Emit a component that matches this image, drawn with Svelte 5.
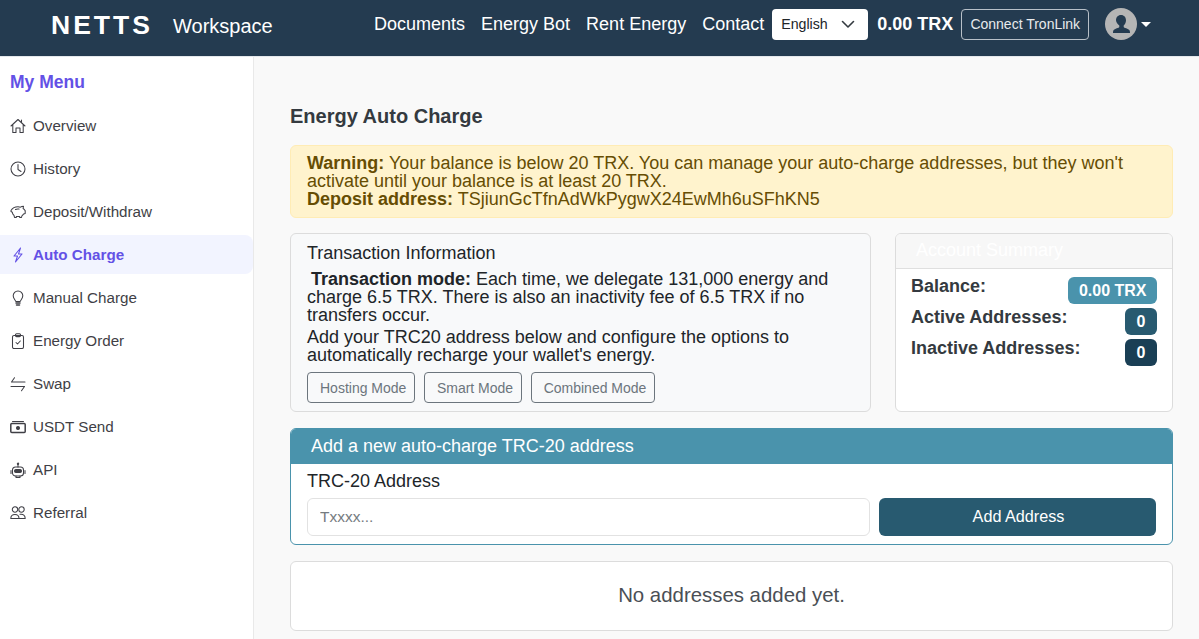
<script>
  const menu = [
    { label: 'Overview', icon: 'home' },
    { label: 'History', icon: 'clock' },
    { label: 'Deposit/Withdraw', icon: 'piggy' },
    { label: 'Auto Charge', icon: 'bolt', active: true },
    { label: 'Manual Charge', icon: 'bulb' },
    { label: 'Energy Order', icon: 'clipboard' },
    { label: 'Swap', icon: 'swap' },
    { label: 'USDT Send', icon: 'cash' },
    { label: 'API', icon: 'robot' },
    { label: 'Referral', icon: 'people' }
  ];
  const links = ['Documents', 'Energy Bot', 'Rent Energy', 'Contact'];
  const modes = ['Hosting Mode', 'Smart Mode', 'Combined Mode'];
</script>

<header class="topbar">
  <div class="brand">NETTS</div>
  <div class="workspace">Workspace</div>
  <nav class="links">
    {#each links as link}
      <span>{link}</span>
    {/each}
  </nav>
  <div class="lang">
    <span>English</span>
    <svg width="16" height="16" viewBox="0 0 16 16" fill="none" stroke="#343a40" stroke-width="1.6" stroke-linecap="round" stroke-linejoin="round"><path d="M2.500 5.500l5.500 5.500 5.500-5.500" /></svg>
  </div>
  <div class="balance">0.00 TRX</div>
  <button class="connect" type="button">Connect TronLink</button>
  <div class="user">
    <svg width="32" height="32" viewBox="0 0 32 32">
      <circle cx="16" cy="16" r="16" fill="#b5b5b5" />
      <path d="M16 7c3.200 0 5 2.400 5 5.300 0 2.200-.9 4.200-2.300 5.300v1.400c0 .8 4.800 1.700 5.800 3.300.5.800.5 2.200.5 2.700H8c0-.5 0-1.900.5-2.700 1-1.600 5.800-2.500 5.800-3.300v-1.400C12.900 16.500 11 14.500 11 12.300 11 9.400 12.800 7 16 7z" fill="#243b50" />
    </svg>
    <i class="caret"></i>
  </div>
</header>

<div class="page">
  <aside class="side">
    <h3>My Menu</h3>
    <ul>
      {#each menu as item}
        <li class:active={item.active}>
          <svg class="ico" width="16" height="16" viewBox="0 0 16 16" fill="none" stroke="currentColor" stroke-width="1.050" stroke-linecap="round" stroke-linejoin="round">
            {#if item.icon === 'home'}
              <path d="M1 8l7-6.500L15 8M2.800 6.500V14.500H6V10h4v4.500h3.200V6.500M11.500 2v2" />
            {:else if item.icon === 'clock'}
              <circle cx="8" cy="8" r="7" /><path d="M8 3.500V8.500l3 2" />
            {:else if item.icon === 'piggy'}
              <path d="M1 6.500C2.500 4 5 2.800 8 2.800c1 0 1.800.1 2.500.4.800-.7 1.900-1 3-1l-.4 2.300c.8.500 1.400 1.100 1.900 2h.2v3l-1.600.6c-.4.700-1 1.300-1.700 1.800l-.4 1.500H9.700v-1H6.300v1H4.500l-.5-2C2.900 10.500 2.400 9.500 2.300 8.200L1 7.500z" /><path d="M5.500 5.500C6.500 5 7.800 4.900 9 5.100" />
            {:else if item.icon === 'bolt'}
              <path d="M10.500 1L4 9h3.500L5.500 15 12 7H8.500z" />
            {:else if item.icon === 'bulb'}
              <path d="M5.800 11.500C5.500 10 3.200 8.500 3.200 5.800a4.800 4.800 0 0 1 9.600 0c0 2.700-2.300 4.200-2.600 5.700z" /><path d="M6 13h4M6.500 15h3" stroke-width="1.500" />
            {:else if item.icon === 'clipboard'}
              <rect x="2.500" y="2.500" width="11" height="13" rx="1.500" /><rect x="5.500" y=".8" width="5" height="2.800" rx="1" /><path d="M6 9.500l1.500 1.500 2.800-3" />
            {:else if item.icon === 'swap'}
              <path d="M15 6H1.500M4.500 1.800L1.500 6M1 10.500h13.500M11.500 14.700l3-4.200" />
            {:else if item.icon === 'cash'}
              <rect x=".8" y="4.500" width="14.400" height="9" rx="1" stroke-width="1.500" /><path d="M2.500 2.500h11" /><circle cx="8" cy="9" r="1.500" fill="currentColor" />
            {:else if item.icon === 'robot'}
              <rect x="2.500" y="5" width="11" height="9" rx="3" /><rect x="4.500" y="7.500" width="7" height="3" rx="1.500" fill="currentColor" /><path d="M8 5V2.500M1 8.500v3M15 8.500v3M6 14v1.500h4V14" /><circle cx="8" cy="1.800" r=".7" />
            {:else}
              <circle cx="5" cy="4.500" r="2.700" /><circle cx="11.500" cy="4.500" r="2.700" /><path d="M.8 13.500c0-2.500 1.500-4 4.200-4s4 1.500 4 4zM10 9.300c3.300-.5 5.200 1.200 5.200 4.200H9" />
            {/if}
          </svg>
          <span>{item.label}</span>
        </li>
      {/each}
    </ul>
  </aside>

  <main class="content">
    <h2>Energy Auto Charge</h2>

    <div class="warning">
      <b>Warning:</b> Your balance is below 20 TRX. You can manage your auto-charge addresses, but they won't activate until your balance is at least 20 TRX.<br />
      <b>Deposit address:</b> TSjiunGcTfnAdWkPygwX24EwMh6uSFhKN5
    </div>

    <div class="row">
      <section class="info">
        <h4>Transaction Information</h4>
        <p class="first"><b>Transaction mode:</b> Each time, we delegate 131,000 energy and charge 6.5 TRX. There is also an inactivity fee of 6.5 TRX if no transfers occur.</p>
        <p>Add your TRC20 address below and configure the options to automatically recharge your wallet's energy.</p>
        <div class="modes">
          {#each modes as mode}
            <button type="button">{mode}</button>
          {/each}
        </div>
      </section>

      <section class="summary">
        <div class="summary-head">Account Summary</div>
        <div class="summary-body">
          <div class="stat">
            <b>Balance:</b>
            <span class="badge teal">0.00 TRX</span>
          </div>
          <div class="stat">
            <b>Active Addresses:</b>
            <span class="badge mid">0</span>
          </div>
          <div class="stat">
            <b>Inactive Addresses:</b>
            <span class="badge dark">0</span>
          </div>
        </div>
      </section>
    </div>

    <section class="add">
      <div class="add-head">Add a new auto-charge TRC-20 address</div>
      <div class="add-body">
        <label for="addr">TRC-20 Address</label>
        <div class="add-row">
          <input id="addr" type="text" placeholder="Txxxx..." />
          <button type="button">Add Address</button>
        </div>
      </div>
    </section>

    <section class="empty">No addresses added yet.</section>
  </main>
</div>

<style>
  :global(body) {
    margin: 0;
    height: 639px;
    overflow: hidden;
    background: #f9f9f9;
    font-family: "Liberation Sans", Arial, sans-serif;
    color: #212529;
  }
  .topbar {
    height: 57px;
    background: #243b50;
    color: #fff;
    display: flex;
    align-items: center;
    box-sizing: border-box;
    padding: 0 47px 8px 51px;
    border-bottom: 1px solid #e4e8ec;
    white-space: nowrap;
  }
  .brand {
    font-size: 26.500px;
    font-weight: 700;
    letter-spacing: 3px;
    width: 122px;
    flex: none;
    margin-top: 2px;
  }
  .workspace {
    font-size: 20px;
    margin-top: 4px;
    width: 201px;
    flex: none;
  }
  .links {
    display: flex;
    gap: 16px;
    font-size: 18px;
  }
  .lang {
    margin-left: 8px;
    width: 96px;
    height: 31px;
    flex: none;
    box-sizing: border-box;
    padding: 0 12px 0 9px;
    background: #fff;
    border-radius: 4px;
    color: #212529;
    font-size: 14.200px;
    display: flex;
    align-items: center;
    justify-content: space-between;
  }
  .balance {
    margin-left: 9px;
    font-size: 18px;
    font-weight: 700;
  }
  .connect {
    margin-left: 8px;
    width: 128px;
    height: 31px;
    flex: none;
    background: transparent;
    border: 1px solid #b8c0c8;
    border-radius: 4px;
    color: #e8eaec;
    font: 14px "Liberation Sans", Arial, sans-serif;
    padding: 0;
  }
  .user {
    margin-left: 16px;
    display: flex;
    align-items: center;
    gap: 4px;
  }
  .caret {
    width: 0;
    height: 0;
    border: 5px solid transparent;
    border-top-color: #fff;
    border-bottom: 0;
  }
  .page {
    display: flex;
    height: 582px;
  }
  .side {
    width: 254px;
    flex: none;
    box-sizing: border-box;
    background: #fff;
    border-right: 1px solid #e9e9e9;
    padding-top: 14px;
  }
  .side h3 {
    margin: 0 0 13px 10px;
    font-size: 17.500px;
    line-height: 22px;
    color: #6351e6;
  }
  .side ul {
    list-style: none;
    margin: 0;
    padding: 0;
  }
  .side li {
    height: 39px;
    margin-bottom: 4px;
    padding-left: 10px;
    display: flex;
    align-items: center;
    gap: 7px;
    font-size: 15.200px;
    color: #3f3f46;
    border-radius: 0 8px 8px 0;
  }
  .side li.active {
    background: #f2f4ff;
    color: #6351e6;
    font-weight: 700;
  }
  .ico {
    flex: none;
  }
  .content {
    flex: 1;
    min-width: 0;
    padding: 0 26px 0 36px;
  }
  h2 {
    margin: 47px 0 16px;
    font-size: 20px;
    line-height: 25px;
    font-weight: 700;
    color: #343a40;
  }
  .warning {
    box-sizing: border-box;
    height: 73px;
    padding: 8px 16px;
    background: #fff3cd;
    border: 1px solid #ffecb5;
    border-radius: 6px;
    color: #664d03;
    font-size: 18px;
    line-height: 18px;
  }
  .row {
    display: flex;
    gap: 24px;
    margin-top: 15px;
    height: 179px;
  }
  .info {
    width: 581px;
    flex: none;
    box-sizing: border-box;
    background: #f8f9fa;
    border: 1px solid #dcdcdc;
    border-radius: 6px;
    padding: 9px 16px;
    font-size: 18px;
    line-height: 18px;
  }
  h4 {
    margin: 0 0 7px;
    font-size: 18px;
    line-height: 20px;
    font-weight: 400;
  }
  .info p {
    margin: 0 0 4px;
  }
  .info p.first {
    text-indent: 4px;
  }
  .modes {
    display: flex;
    gap: 8.500px;
    margin-top: 8px;
  }
  .modes button {
    height: 31px;
    padding: 0 8px 0 12px;
    background: transparent;
    border: 1px solid #6c757d;
    border-radius: 4px;
    color: #6c757d;
    font: 14px "Liberation Sans", Arial, sans-serif;
  }
  .summary {
    flex: 1;
    background: #fff;
    border: 1px solid #dcdcdc;
    border-radius: 6px;
    overflow: hidden;
  }
  .summary-head {
    height: 35px;
    box-sizing: border-box;
    padding: 6px 20px;
    background: #f7f7f7;
    border-bottom: 1px solid #dfdfdf;
    color: #fff;
    font-size: 18px;
    line-height: 21px;
  }
  .summary-body {
    padding: 8px 15px 0;
  }
  .stat {
    display: flex;
    justify-content: space-between;
    align-items: flex-start;
    height: 31px;
    font-size: 18px;
    line-height: 18px;
    color: #343a40;
  }
  .badge {
    min-width: 32px;
    height: 27px;
    box-sizing: border-box;
    padding: 0 10.500px;
    border-radius: 6px;
    color: #fff;
    font-size: 16px;
    font-weight: 700;
    line-height: 27px;
    text-align: center;
  }
  .teal {
    background: #4a93ac;
  }
  .mid {
    background: #285a70;
  }
  .dark {
    background: #1a3f55;
  }
  .add {
    margin-top: 16px;
    box-sizing: border-box;
    height: 117px;
    background: #fff;
    border: 1px solid #4a93ac;
    border-radius: 6px;
    overflow: hidden;
  }
  .add-head {
    height: 35px;
    box-sizing: border-box;
    padding-left: 20px;
    background: #4a93ac;
    color: #fff;
    font-size: 18px;
    line-height: 35px;
  }
  .add-body {
    padding: 7px 16px 0;
  }
  label {
    display: block;
    font-size: 18px;
    line-height: 20px;
    margin-bottom: 7px;
  }
  .add-row {
    display: flex;
    gap: 9px;
  }
  input {
    flex: 1;
    min-width: 0;
    height: 38px;
    box-sizing: border-box;
    padding: 0 12px;
    border: 1px solid #e2e2e2;
    border-radius: 6px;
    font: 15.500px "Liberation Sans", Arial, sans-serif;
    outline: none;
  }
  input::placeholder {
    color: #757b80;
  }
  .add-row button {
    width: 277px;
    height: 38px;
    flex: none;
    padding: 0 0 1px 2px;
    background: #285a70;
    border: 0;
    border-radius: 6px;
    color: #fff;
    font: 16.200px "Liberation Sans", Arial, sans-serif;
  }
  .empty {
    margin-top: 16px;
    height: 70px;
    box-sizing: border-box;
    padding-bottom: 2px;
    background: #fff;
    border: 1px solid #dcdcdc;
    border-radius: 6px;
    display: flex;
    align-items: center;
    justify-content: center;
    font-size: 20.400px;
    color: #4a4f55;
  }
</style>
